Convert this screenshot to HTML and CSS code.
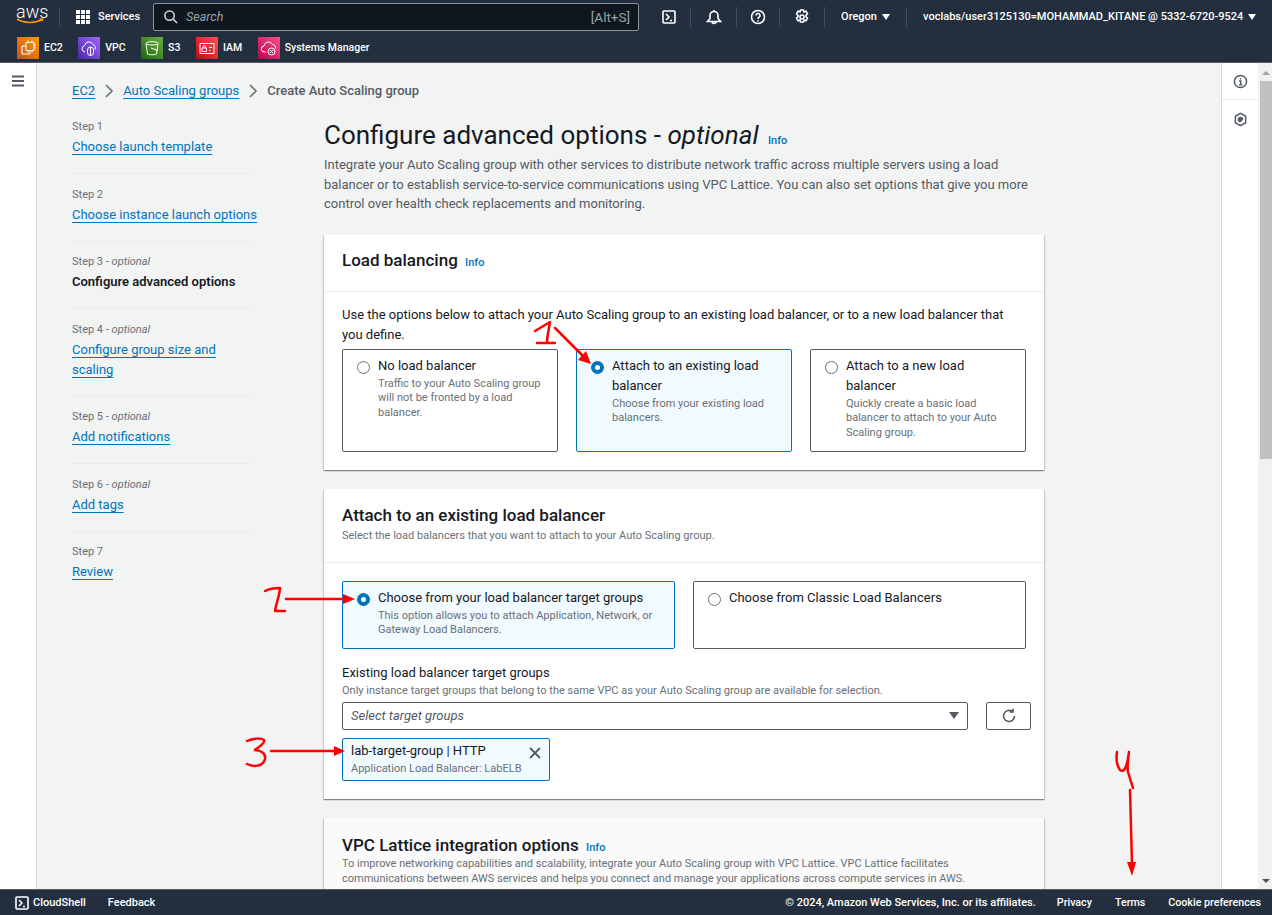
FILE: index.html
```html
<!doctype html>
<html lang="en">

<head>
  <meta charset="UTF-8" />
  <title>Create Auto Scaling group</title>
  <link rel="stylesheet" href="styles.css">
</head>

<body>
  <header class="top">
    <div class="top-row">
      <a class="aws-logo">
        <span>aws</span>
        <svg viewBox="0 0 28 6" width="28" height="6">
          <path d="M1 1c7 4.500 18 4.500 25 .5" fill="none" stroke="#f90" stroke-width="1.500" />
          <path d="M23 .6l4.500 -.4l-1.200 3.600z" fill="#f90" />
        </svg>
      </a>
      <i class="sep"></i>
      <svg class="grid-icon" viewBox="0 0 14 14">
        <path d="M0 0h4v4H0zM5 0h4v4H5zM10 0h4v4h-4zM0 5h4v4H0zM5 5h4v4H5zM10 5h4v4h-4zM0 10h4v4H0zM5 10h4v4H5zM10 10h4v4h-4z" />
      </svg>
      <span class="services">Services</span>
      <div class="search">
        <svg viewBox="0 0 16 16">
          <circle cx="7" cy="7" r="5" />
          <path d="M11 11l4 4" />
        </svg>
        <em>Search</em>
        <span>[Alt+S]</span>
      </div>
      <div class="top-tools">
        <span class="tool">
          <svg viewBox="0 0 16 16">
            <rect x="2" y="2" width="12" height="12" rx="1" />
            <path d="M5 5l3 3l-3 3M9 11.500h2" />
          </svg>
        </span>
        <span class="tool">
          <svg viewBox="0 0 16 16">
            <path d="M1.500 12.500h13l-2.500 -3v-3a4 4 0 0 0 -8 0v3zM6 12.500a2 2 0 0 0 4 0M8 1v1.500" />
          </svg>
        </span>
        <span class="tool">
          <svg viewBox="0 0 16 16">
            <circle cx="8" cy="8" r="6.500" />
            <path d="M6 6.500a2 2 0 1 1 3 1.700c-.7 .4 -1 .8 -1 1.800M8 11.200v1.300" />
          </svg>
        </span>
        <span class="tool">
          <svg viewBox="0 0 16 16">
            <path d="M6.500 1h3l.5 2l2 -.8l1.500 2.600l-1.500 1.500v1.400l1.500 1.500l-1.500 2.600l-2 -.8l-.5 2h-3l-.5 -2l-2 .8l-1.500 -2.600l1.500 -1.500v-1.400l-1.500 -1.500l1.500 -2.600l2 .8z" />
            <circle cx="8" cy="8" r="2" />
          </svg>
        </span>
        <span class="tool region">Oregon <b class="caret"></b></span>
        <span class="tool account">voclabs/user3125130=MOHAMMAD_KITANE @ 5332-6720-9524 <b class="caret"></b></span>
      </div>
    </div>
    <nav class="shortcuts">
      <a><span class="svc orange"><svg viewBox="0 0 18 18"><path d="M7 3.500h8v8h-8zM9 1.500v2M13 1.500v2M9 11.500v2M13 11.500v2M15 6h2M15 9h2M7 7h-4v8h8v-3.500" /></svg></span>EC2</a>
      <a><span class="svc purple"><svg viewBox="0 0 18 18"><path d="M5 13a3.200 3.200 0 0 1 -.5 -6.300a4.500 4.500 0 0 1 8.500 -1.200a3.500 3.500 0 0 1 2 5" /><rect x="7.500" y="8" width="6" height="8.500" rx="3" /><path d="M10.500 8v8.500" /></svg></span>VPC</a>
      <a><span class="svc green"><svg viewBox="0 0 18 18"><path d="M3 4.500c0 -2.500 12 -2.500 12 0l-1.500 10.500c-1 1 -8 1 -9 0zM3 4.500c1 2 11 2 12 0M8 9l7 2.500" /></svg></span>S3</a>
      <a><span class="svc red"><svg viewBox="0 0 18 18"><path d="M2 4.500h14v10h-14zM4 9h4.500v3.500h-4.500zM5 9v-1a1.200 1.200 0 0 1 2.500 0v1M11 8.500h3M11 11.500h1.500" /></svg></span>IAM</a>
      <a><span class="svc pink"><svg viewBox="0 0 18 18"><path d="M6 13h-1.500a3 3 0 0 1 -.5 -6a4.500 4.500 0 0 1 8.500 -1.500a3.500 3.500 0 0 1 3 4" /><circle cx="11.500" cy="12.500" r="3.500" /><path d="M10 11l3 3M13 11l-3 3" /></svg></span>Systems Manager</a>
    </nav>
  </header>

  <div class="shell">
    <aside class="left-nav">
      <svg viewBox="0 0 14 12">
        <path d="M1 1.500h12M1 6h12M1 10.500h12" />
      </svg>
    </aside>

    <main class="content">
      <div class="crumbs">
        <a>EC2</a>
        <svg viewBox="0 0 10 14"><path d="M2 1l6 6l-6 6" /></svg>
        <a>Auto Scaling groups</a>
        <svg viewBox="0 0 10 14"><path d="M2 1l6 6l-6 6" /></svg>
        <span>Create Auto Scaling group</span>
      </div>

      <div class="wizard">
        <ol class="steps">
          <li><small>Step 1</small><a>Choose launch template</a></li>
          <li><small>Step 2</small><a>Choose instance launch options</a></li>
          <li><small>Step 3 - <em>optional</em></small><strong>Configure advanced options</strong></li>
          <li><small>Step 4 - <em>optional</em></small><a>Configure group size and scaling</a></li>
          <li><small>Step 5 - <em>optional</em></small><a>Add notifications</a></li>
          <li><small>Step 6 - <em>optional</em></small><a>Add tags</a></li>
          <li><small>Step 7</small><a>Review</a></li>
        </ol>

        <section class="form">
          <h1>Configure advanced options - <em>optional</em> <a class="info">Info</a></h1>
          <p class="lead">Integrate your Auto Scaling group with other services to distribute network traffic across multiple servers using a load balancer or to establish service-to-service communications using VPC Lattice. You can also set options that give you more control over health check replacements and monitoring.</p>

          <div class="card">
            <div class="card-head">
              <h2>Load balancing <a class="info">Info</a></h2>
            </div>
            <div class="card-body">
              <p class="intro">Use the options below to attach your Auto Scaling group to an existing load balancer, or to a new load balancer that you define.</p>
              <div class="tiles three">
                <div class="tile">
                  <i class="radio"></i>
                  <div>
                    <div class="tile-title">No load balancer</div>
                    <div class="tile-desc">Traffic to your Auto Scaling group will not be fronted by a load balancer.</div>
                  </div>
                </div>
                <div class="tile on">
                  <i class="radio"></i>
                  <div>
                    <div class="tile-title">Attach to an existing load balancer</div>
                    <div class="tile-desc">Choose from your existing load balancers.</div>
                  </div>
                </div>
                <div class="tile">
                  <i class="radio"></i>
                  <div>
                    <div class="tile-title">Attach to a new load balancer</div>
                    <div class="tile-desc">Quickly create a basic load balancer to attach to your Auto Scaling group.</div>
                  </div>
                </div>
              </div>
            </div>
          </div>

          <div class="card">
            <div class="card-head sub">
              <h2>Attach to an existing load balancer</h2>
              <p>Select the load balancers that you want to attach to your Auto Scaling group.</p>
            </div>
            <div class="card-body">
              <div class="tiles two">
                <div class="tile on">
                  <i class="radio"></i>
                  <div>
                    <div class="tile-title">Choose from your load balancer target groups</div>
                    <div class="tile-desc">This option allows you to attach Application, Network, or Gateway Load Balancers.</div>
                  </div>
                </div>
                <div class="tile">
                  <i class="radio"></i>
                  <div>
                    <div class="tile-title">Choose from Classic Load Balancers</div>
                  </div>
                </div>
              </div>
              <label class="field-label">Existing load balancer target groups</label>
              <div class="field-hint">Only instance target groups that belong to the same VPC as your Auto Scaling group are available for selection.</div>
              <div class="select-row">
                <div class="select"><em>Select target groups</em><b class="caret dark"></b></div>
                <button class="refresh">
                  <svg viewBox="0 0 16 16">
                    <path d="M13.500 8a5.500 5.500 0 1 1 -2 -4.300M12 .8v3.200h-3.200" />
                  </svg>
                </button>
              </div>
              <div class="token">
                <div>
                  <div class="token-title">lab-target-group | HTTP</div>
                  <div class="token-desc">Application Load Balancer: LabELB</div>
                </div>
                <svg viewBox="0 0 12 12"><path d="M1 1l10 10M11 1l-10 10" /></svg>
              </div>
            </div>
          </div>

          <div class="card faded">
            <div class="card-head sub">
              <h2>VPC Lattice integration options <a class="info">Info</a></h2>
              <p>To improve networking capabilities and scalability, integrate your Auto Scaling group with VPC Lattice. VPC Lattice facilitates communications between AWS services and helps you connect and manage your applications across compute services in AWS.</p>
            </div>
          </div>
        </section>
      </div>
    </main>

    <aside class="right-rail">
      <span class="rail-btn">
        <svg viewBox="0 0 16 16"><circle cx="8" cy="8" r="6.500" /><path d="M6.500 7.500h1.700v4M6.500 11.500h3.400M8 4.200v1.600" /></svg>
      </span>
      <span class="rail-btn">
        <svg viewBox="0 0 16 16"><path d="M8 1.500l5.500 3v7l-5.500 3l-5.500 -3v-7z" /><path class="fill" d="M8 5a3 3 0 0 1 3 3l-3 3a3 3 0 0 1 0 -6z" /></svg>
      </span>
    </aside>

    <div class="scrollbar">
      <i class="arrow up"></i>
      <i class="thumb"></i>
      <i class="arrow down"></i>
    </div>
  </div>

  <footer class="bottom">
    <svg class="shell-icon" viewBox="0 0 16 16">
      <rect x="2" y="2" width="12" height="12" rx="1" />
      <path d="M5 5l3 3l-3 3M9 11.500h2" />
    </svg>
    <span>CloudShell</span>
    <span class="feedback">Feedback</span>
    <span class="copy">© 2024, Amazon Web Services, Inc. or its affiliates.</span>
    <span class="foot-link">Privacy</span>
    <span class="foot-link">Terms</span>
    <span class="foot-link">Cookie preferences</span>
  </footer>

  <!-- hand drawn notes on top of the screenshot -->
  <svg class="notes" viewBox="0 0 1272 915">
    <path d="M535 331c5 -3 10 -6 15 -9c-1 7 -3 14 -3 21M537 343h18" />
    <path d="M555 328l33 33" />
    <path class="head" d="M591 364l-13 -4l8 -9z" />
    <path d="M265 591c4 -2 10 -3 15 -3c0 6 -4 16 -5 23h10" />
    <path d="M286 599h58" />
    <path class="head" d="M355 599l-12 -5v10z" />
    <path d="M247 741c6 -3 14 -3 17 -1c2 3 -8 9 -9 10c5 0 11 3 10 9c-2 8 -12 8 -18 5" />
    <path d="M271 751h66" />
    <path class="head" d="M345 751l-11 -5v10z" />
    <path d="M1117 752c-1 7 0 14 3 18c4 3 7 -2 9 -18c-1 7 -2 13 -1 20l5 16" />
    <path d="M1130 790l2 74" />
    <path class="head" d="M1132 876l-5 -14h9z" />
  </svg>
</body>

</html>
```

FILE: styles.css
```css
:root {
  --navy: #232f3e;
  --link: #0073bb;
  --text: #16191f;
  --muted: #687078;
  --line: #eaeded;
  --page: #f2f3f3;
  --field: #545b64;
}

* {
  margin: 0;
  padding: 0;
  box-sizing: border-box;
}

body {
  width: 1272px;
  height: 915px;
  overflow: hidden;
  display: flex;
  flex-direction: column;
  position: relative;
  font-family: Roboto, "Liberation Sans", sans-serif;
  font-size: 13px;
  color: var(--text);
  background: var(--page);
}

a {
  color: var(--link);
}

svg {
  fill: none;
  stroke: currentColor;
  stroke-width: 1.6;
}

/* top bar */
.top {
  height: 63px;
  flex: none;
  background: var(--navy);
  border-bottom: 1px solid #545b64;
  color: #fff;
  font-size: 11px;
  font-weight: 500;
}

.top-row {
  height: 33px;
  display: flex;
  align-items: center;
  padding-left: 16px;
}

.aws-logo {
  width: 28px;
  height: 26px;
  display: flex;
  flex-direction: column;
  color: #fff;
  line-height: 15px;
  font-size: 18px;
  font-weight: 300;
}

.aws-logo svg {
  stroke: none;
  margin-top: -1px;
  flex: none;
}

.sep {
  width: 1px;
  height: 20px;
  margin-left: 15px;
  background: #414d5c;
}

.grid-icon {
  width: 14px;
  height: 14px;
  margin-left: 16px;
  fill: #fff;
  stroke: none;
}

.services {
  margin-left: 8px;
}

.search {
  width: 486px;
  height: 28px;
  flex: none;
  margin-left: 13px;
  display: flex;
  align-items: center;
  padding: 0 8px 0 9px;
  background: #10161f;
  border: 1px solid #879596;
  border-radius: 2px;
  color: #95a5a6;
  font-size: 12.500px;
  font-weight: 400;
}

.search svg {
  width: 15px;
  height: 15px;
  color: #d5dbdb;
}

.search em {
  flex: 1;
  margin-left: 8px;
}

.search span {
  font-size: 13.500px;
}

.top-tools {
  display: flex;
  align-items: center;
  height: 20px;
  margin-left: 8px;
}

.tool {
  display: flex;
  align-items: center;
  justify-content: center;
  gap: 5px;
  height: 20px;
  width: 45px;
  flex: none;
  border-right: 1px solid #414d5c;
  white-space: nowrap;
  color: #fff;
}

.tool:nth-child(1) { width: 44px; }
.tool:nth-child(2) { width: 46px; }
.tool:nth-child(3) { width: 43px; }

.tool svg {
  width: 16px;
  height: 16px;
}

.tool.region {
  width: 82px;
  justify-content: flex-start;
  padding-left: 16px;
}

.tool.account {
  width: auto;
  padding-left: 16px;
  border: none;
}

.caret {
  display: inline-block;
  width: 0;
  height: 0;
  border-left: 4px solid transparent;
  border-right: 4px solid transparent;
  border-top: 6px solid currentColor;
}

.shortcuts {
  height: 29px;
  display: flex;
  align-items: center;
  padding-left: 17px;
  gap: 15.500px;
}

.shortcuts a {
  display: flex;
  align-items: center;
  gap: 5px;
  color: #fff;
  font-size: 10.500px;
  font-weight: 500;
}

.svc {
  width: 22px;
  height: 22px;
  display: flex;
  align-items: center;
  justify-content: center;
}

.svc svg {
  width: 18px;
  height: 18px;
  stroke-width: 1;
}

.orange { background: linear-gradient(45deg, #c8511b, #f90); }
.purple { background: linear-gradient(45deg, #4d27a8, #a166ff); }
.green { background: linear-gradient(45deg, #1b660f, #6cae3e); }
.red { background: linear-gradient(45deg, #bd0816, #ff5252); }
.pink { background: linear-gradient(45deg, #b0084d, #ff4f8b); }

/* shell */
.shell {
  flex: 1;
  min-height: 0;
  display: flex;
}

.left-nav {
  width: 37px;
  flex: none;
  background: #fff;
  border-right: 1px solid #d5dbdb;
  padding: 12px 0 0 11px;
  color: #545b64;
}

.left-nav svg {
  display: block;
  width: 14px;
  height: 12px;
  stroke-width: 2;
}

.content {
  flex: 1;
  min-width: 0;
  overflow: hidden;
  padding: 18px 0 0 35px;
}

.crumbs {
  display: flex;
  align-items: center;
  height: 19px;
  gap: 9px;
}

.crumbs a {
  text-decoration: underline;
  text-underline-offset: 3px;
}

.crumbs span {
  font-weight: 500;
  color: var(--field);
}

.crumbs svg {
  width: 10px;
  height: 14px;
  color: #687078;
}

.wizard {
  display: flex;
  margin-top: 18px;
  align-items: flex-start;
}

.steps {
  list-style: none;
  width: 180px;
  flex: none;
  margin-right: 72px;
  padding-top: 1px;
}

.steps li {
  padding-bottom: 16px;
  margin-bottom: 12.500px;
  border-bottom: 1px solid var(--line);
  line-height: 20px;
}

.steps li:last-child {
  border: none;
}

.steps small {
  display: block;
  font-size: 11px;
  line-height: 16px;
  margin-bottom: 2px;
  color: var(--muted);
}

.steps a {
  display: inline-block;
  margin-right: -6px;
  text-decoration: underline;
  text-underline-offset: 3px;
}

.steps strong {
  font-weight: 600;
}

.form {
  width: 720px;
  flex: none;
}

h1 {
  padding-top: 3px;
  font-size: 26px;
  line-height: 28px;
  font-weight: 400;
  color: var(--text);
}

.info {
  font-size: 11px;
  font-weight: 500;
  margin-left: 3px;
}

h2 .info {
  line-height: 1;
}

.lead {
  line-height: 19.500px;
  color: var(--field);
}

.card {
  margin-top: 19px;
  background: #fff;
  box-shadow: 0 1px 1px 0 rgba(0, 28, 36, .3), 1px 1px 1px 0 rgba(0, 28, 36, .15), -1px 1px 1px 0 rgba(0, 28, 36, .15);
}

.lead + .card {
  margin-top: 21px;
}

.card-head {
  height: 57px;
  padding: 14px 18px 0;
  border-bottom: 1px solid var(--line);
}

.card-head.sub {
  height: 74px;
  padding-top: 15px;
}

.card-head.sub p {
  margin-top: 2px;
  font-size: 11px;
  line-height: 15px;
  color: var(--muted);
}

h2 {
  font-size: 17px;
  line-height: 22px;
  font-weight: 500;
}

.card-body {
  padding: 13px 18px 18px;
}

.intro {
  line-height: 20px;
}

.tiles {
  display: grid;
  gap: 18px;
}

.tiles.three {
  grid-template-columns: repeat(3, 1fr);
  height: 103px;
  margin-top: 4px;
}

.tiles.two {
  grid-template-columns: repeat(2, 1fr);
  height: 68px;
  margin-top: 5px;
}

.tile {
  display: flex;
  gap: 8px;
  padding: 6px 14px;
  background: #fff;
  border: 1px solid var(--field);
  border-radius: 2px;
}

.tile.on {
  background: #f1faff;
  border-color: var(--link);
}

.radio {
  width: 13px;
  height: 13px;
  flex: none;
  margin-top: 5px;
  border: 1px solid #687078;
  border-radius: 50%;
  background: #fff;
}

.tile.on .radio {
  border: 4px solid var(--link);
}

.tile-title {
  line-height: 20px;
  margin-bottom: 1px;
}

.tile-desc {
  font-size: 11px;
  line-height: 14.500px;
  color: var(--muted);
}

.field-label {
  display: block;
  margin-top: 14px;
  line-height: 20px;
}

.field-hint {
  font-size: 11px;
  line-height: 15px;
  color: var(--muted);
}

.select-row {
  display: flex;
  margin-top: 4px;
  gap: 18px;
}

.select {
  flex: 1;
  height: 28px;
  display: flex;
  align-items: center;
  justify-content: space-between;
  padding: 0 8px;
  border: 1px solid var(--field);
  border-radius: 2px;
  color: var(--field);
}

.caret.dark {
  border-left-width: 5px;
  border-right-width: 5px;
  border-top-width: 7px;
}

.refresh {
  width: 45px;
  height: 28px;
  margin-right: -5px;
  display: flex;
  align-items: center;
  justify-content: center;
  background: #fff;
  border: 1px solid var(--field);
  border-radius: 2px;
  color: var(--field);
}

.refresh svg {
  width: 16px;
  height: 16px;
}

.token {
  width: 208px;
  height: 43px;
  margin-top: 8px;
  display: flex;
  justify-content: space-between;
  padding: 2px 8px;
  background: #f1faff;
  border: 1px solid var(--link);
  border-radius: 2px;
}

.token-title {
  line-height: 20px;
}

.token-desc {
  font-size: 11px;
  line-height: 16px;
  color: var(--muted);
}

.token svg {
  width: 12px;
  height: 12px;
  margin: 6px 0 0;
  color: #545b64;
  stroke-width: 1.8;
}

.card.faded {
  background: #fafafa;
  height: 120px;
}

.card.faded .card-head {
  border: none;
  height: auto;
  padding-top: 16px;
}

.card.faded p {
  margin-top: 0;
}

/* right side */
.right-rail {
  width: 37px;
  flex: none;
  background: #fff;
  border-left: 1px solid #d5dbdb;
  color: #545b64;
}

.rail-btn {
  height: 37px;
  display: flex;
  align-items: center;
  justify-content: center;
  padding-top: 1px;
  border-bottom: 1px solid var(--line);
}

.rail-btn + .rail-btn {
  border: none;
}

.rail-btn svg {
  width: 15px;
  height: 15px;
}

.rail-btn .fill {
  fill: currentColor;
  stroke: none;
}

.scrollbar {
  width: 14px;
  flex: none;
  display: flex;
  flex-direction: column;
  align-items: flex-end;
  background: #f1f1f1;
}

.arrow {
  flex: none;
  width: 0;
  height: 0;
  margin-right: 2px;
  border-left: 4px solid transparent;
  border-right: 4px solid transparent;
}

.arrow.up {
  margin-top: 8px;
  margin-bottom: 6px;
  border-bottom: 4px solid #a3a3a3;
}

.arrow.down {
  margin-bottom: 6px;
  border-top: 4px solid #505050;
}

.thumb {
  width: 12px;
  height: 378px;
  background: #c1c1c1;
  margin-bottom: auto;
}

/* footer */
.bottom {
  height: 26px;
  flex: none;
  display: flex;
  align-items: center;
  padding: 0 11px 0 14px;
  background: var(--navy);
  border-top: 1px solid #545b64;
  color: #fff;
  font-size: 11px;
  font-weight: 500;
}

.shell-icon {
  width: 16px;
  height: 16px;
  margin-right: 3px;
}

.feedback {
  margin-left: 22px;
}

.copy {
  margin-left: auto;
}

.foot-link {
  margin-left: 23px;
  font-size: 10.700px;
}

.copy + .foot-link {
  margin-left: 21px;
}

/* annotations */
.notes {
  position: absolute;
  inset: 0;
  width: 1272px;
  height: 915px;
  pointer-events: none;
  stroke: #f00;
  stroke-width: 2.500;
  stroke-linecap: round;
  stroke-linejoin: round;
}

.notes .head {
  fill: #f00;
  stroke: none;
}
```
